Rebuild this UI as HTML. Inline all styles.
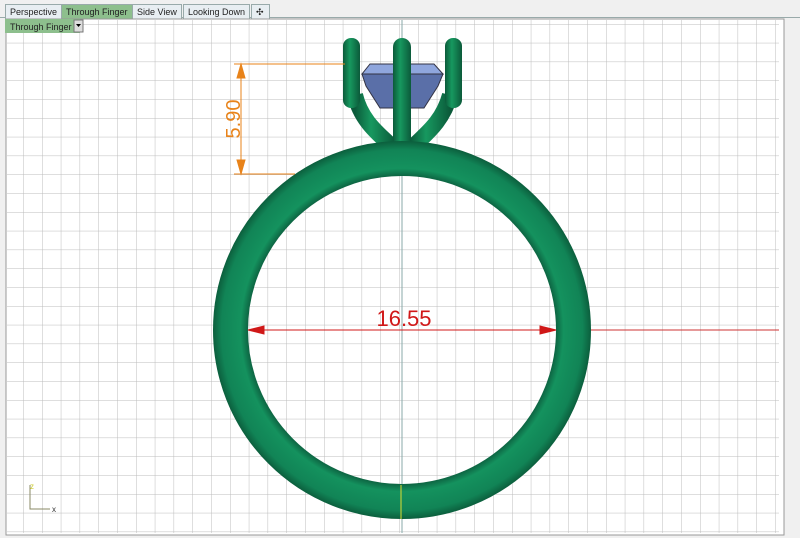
<!DOCTYPE html>
<html><head><style>
body{margin:0;width:800px;height:538px;background:#f0f0f0;overflow:hidden;font-family:"Liberation Sans",sans-serif}
.tab{position:absolute;top:4px;height:14px;font-size:9px;line-height:14px;padding:0 4px;border:1px solid #9aa;border-bottom:none;background:#e8eef2;color:#222;white-space:nowrap}
</style></head><body>
<div style="position:absolute;left:0;top:17px;width:800px;height:1px;background:#9aa"></div>
<div class="tab" style="left:5px">Perspective</div>
<div class="tab" style="left:61px;background:#8dbf8d">Through Finger</div>
<div class="tab" style="left:132px">Side View</div>
<div class="tab" style="left:183px">Looking Down</div>
<div class="tab" style="left:251px;width:9px">✣</div>
<svg width="800" height="538" style="position:absolute;left:0;top:0">
<defs>
<pattern id="g" x="4.4" y="5.2" width="18.8" height="18.8" patternUnits="userSpaceOnUse">
<path d="M0 0H18.8M0 0V18.8" stroke="#bcbcbc" stroke-width="1" fill="none"/></pattern>
<radialGradient id="rg" cx="402" cy="330" r="190" gradientUnits="userSpaceOnUse">
<stop offset="0.81" stop-color="#0d6442"/><stop offset="0.85" stop-color="#14925e"/><stop offset="0.95" stop-color="#118456"/><stop offset="1" stop-color="#0b5a3a"/></radialGradient>
<linearGradient id="pg" x1="0" x2="1"><stop offset="0" stop-color="#0b5a3a"/><stop offset=".4" stop-color="#17985f"/><stop offset="1" stop-color="#0b5a3a"/></linearGradient>
</defs>
<rect x="6" y="19" width="778" height="516" fill="#fff" stroke="#999"/>
<rect x="7" y="20" width="772" height="513" fill="url(#g)"/>
<rect x="5" y="19" width="75" height="14" fill="#8dbf8d"/>
<text x="10" y="30" font-size="9" fill="#222" font-family="Liberation Sans">Through Finger</text>
<rect x="74" y="20" width="9" height="12" fill="#ddd" stroke="#777"/><path d="M76 24h5l-2.5 3z" fill="#000"/>
<line x1="402" y1="20" x2="402" y2="533" stroke="#8aa" />
<line x1="402" y1="330" x2="779" y2="330" stroke="#c33"/>
<path d="M355 95 C362 125 385 138 395 150" stroke="url(#pg)" stroke-width="16" fill="none"/>
<path d="M450 95 C442 125 420 138 410 150" stroke="url(#pg)" stroke-width="16" fill="none"/>
<polygon points="362,74 443,74 438,86 424,108 380,108 366,86" fill="#5a6fa8" stroke="#334"/>
<polygon points="370,64 434,64 443,74 362,74" fill="#8fa6dd" stroke="#334"/>
<rect x="343" y="38" width="17" height="70" rx="8" fill="url(#pg)"/>
<rect x="445" y="38" width="17" height="70" rx="8" fill="url(#pg)"/>
<rect x="393" y="38" width="18" height="112" rx="9" fill="url(#pg)"/>
<circle cx="402" cy="330" r="171.5" fill="none" stroke="url(#rg)" stroke-width="35"/>
<line x1="401" y1="485" x2="401" y2="519" stroke="#dd3" />
<g stroke="#e8831a" fill="#e8831a">
<line x1="234" y1="64" x2="345" y2="64"/><line x1="234" y1="174" x2="295" y2="174"/>
<line x1="241" y1="64" x2="241" y2="174"/>
<path d="M241 64l-4 14h8z M241 174l-4 -14h8z"/>
</g>
<text transform="translate(240,119) rotate(-90)" font-size="20" fill="#e8831a" text-anchor="middle" font-family="Liberation Sans">5.90</text>
<g stroke="#d01818" fill="#d01818">
<line x1="248" y1="330" x2="556" y2="330"/>
<path d="M248 330l16-4v8z M556 330l-16-4v8z"/>
</g>
<text x="404" y="326" font-size="22" fill="#d01818" text-anchor="middle" font-family="Liberation Sans">16.55</text>
<path d="M30 485V509H50" stroke="#886" fill="none"/>
<text x="30" y="489" font-size="8" fill="#cc3">z</text><text x="52" y="512" font-size="8" fill="#333">x</text>
</svg>
</body></html>
